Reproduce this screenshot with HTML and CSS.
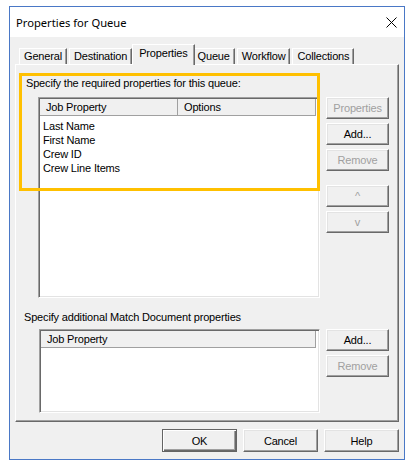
FILE: index.html
```html
<!DOCTYPE html>
<html lang="en">
<head>
    <meta charset="UTF-8">
    <meta name="viewport" content="width=device-width, initial-scale=1.0">
    <title>Properties for Queue</title>
    <link rel="stylesheet" href="styles.css">
</head>
<body>
    <div class="dialog">
        <div class="titlebar">
            <span class="title">Properties for Queue</span>
            <span class="close">
                <svg width="11" height="11" viewBox="0 0 11 11">
                    <path d="M0.5 0.5 L10.5 10.5 M10.5 0.5 L0.5 10.5" stroke="#000" stroke-width="1" fill="none"/>
                </svg>
            </span>
        </div>

        <div class="body">
            <div class="tabs">
                <div class="tab">General</div>
                <div class="tab">Destination</div>
                <div class="tab active">Properties</div>
                <div class="tab">Queue</div>
                <div class="tab">Workflow</div>
                <div class="tab">Collections</div>
            </div>

            <div class="page">
                <div class="highlight"></div>

                <div class="label">Specify the required properties for this queue:</div>
                <div class="group">
                    <div class="listbox tall">
                        <div class="header">
                            <div class="col col-job">Job Property</div>
                            <div class="col col-options">Options</div>
                        </div>
                        <div class="rows">
                            <div class="row">Last Name</div>
                            <div class="row">First Name</div>
                            <div class="row">Crew ID</div>
                            <div class="row">Crew Line Items</div>
                        </div>
                    </div>
                    <div class="side">
                        <button class="btn" disabled>Properties</button>
                        <button class="btn">Add...</button>
                        <button class="btn" disabled>Remove</button>
                        <button class="btn arrow" disabled>^</button>
                        <button class="btn" disabled>v</button>
                    </div>
                </div>

                <div class="label second">Specify additional Match Document properties</div>
                <div class="group second">
                    <div class="listbox short">
                        <div class="header">
                            <div class="col col-full">Job Property</div>
                        </div>
                    </div>
                    <div class="side">
                        <button class="btn">Add...</button>
                        <button class="btn" disabled>Remove</button>
                    </div>
                </div>
            </div>

            <div class="footer">
                <button class="btn wide default">OK</button>
                <button class="btn wide">Cancel</button>
                <button class="btn wide">Help</button>
            </div>
        </div>
    </div>
</body>
</html>
```

FILE: styles.css
```css
body {
    margin: 0;
    background: #ffffff;
    font-family: "Liberation Sans", Arial, sans-serif;
    font-size: 11px;
    letter-spacing: -0.17px;
    color: #000000;
}

.dialog {
    margin: 6px 0 0 9px;
    width: 394px;
    height: 452px;
    border: 1px solid #4a78c6;
    display: flex;
    flex-direction: column;
}

.titlebar {
    height: 30px;
    background: #ffffff;
    display: flex;
    align-items: center;
    justify-content: space-between;
    padding: 0 7px 0 6px;
}

.title {
    font-family: "Noto Sans", "Open Sans", sans-serif;
    font-size: 11.2px;
    letter-spacing: 0;
    padding-top: 1px;
}

.close {
    display: flex;
    padding-top: 1px;
}

.body {
    flex: 1;
    background: #f0f0f0;
    padding: 7px 5px 6px 5px;
    display: flex;
    flex-direction: column;
}

/* tab strip */
.tabs {
    display: flex;
    align-items: flex-end;
    height: 20px;
    padding-left: 4px;
}

.tab {
    height: 15px;
    line-height: 15px;
    padding: 0 4px;
    margin-right: 2px;
    border: 1px solid #ffffff;
    border-right-color: #696969;
    border-bottom: none;
    box-shadow: inset -1px 0 #a0a0a0;
    white-space: nowrap;
}

.tab.active {
    height: 20px;
    line-height: 17px;
    margin: 0 0 -1px -2px;
    padding: 0 6px;
    background: #f0f0f0;
    position: relative;
    z-index: 1;
}

.tab.active + .tab {
    margin-left: -2px;
}

/* tab page */
.page {
    position: relative;
    height: 356px;
    border: 1px solid #ffffff;
    border-right-color: #696969;
    border-bottom-color: #696969;
    box-shadow: inset -1px -1px #a0a0a0;
}

.highlight {
    position: absolute;
    left: 3px;
    top: 8px;
    width: 295px;
    height: 112px;
    border: 3px solid #ffc000;
    pointer-events: none;
}

.label {
    line-height: 14px;
    padding: 11px 0 0 10px;
}

.label.second {
    padding: 12px 0 0 8px;
}

.group {
    display: flex;
    gap: 6px;
    margin-top: 7px;
    padding-left: 22px;
}

.group.second {
    margin-top: 5px;
    padding-left: 23px;
}

/* list view */
.listbox {
    box-sizing: border-box;
    background: #ffffff;
    border: 1px solid #a0a0a0;
    border-right-color: #ffffff;
    border-bottom-color: #ffffff;
    box-shadow: inset 1px 1px #696969, inset -1px -1px #e3e3e3;
    padding: 1px 0 0 1px;
}

.listbox.tall {
    width: 282px;
    height: 201px;
}

.listbox.short {
    width: 281px;
    height: 84px;
}

.header {
    display: flex;
    height: 16px;
    margin-right: 3px;
    background: #f0f0f0;
    border-bottom: 1px solid #a0a0a0;
}

.col {
    line-height: 16px;
    padding-left: 6px;
    border-right: 1px solid #a0a0a0;
    box-sizing: border-box;
}

.col-job {
    width: 138px;
}

.col-options {
    flex: 1;
}

.col-full {
    flex: 1;
}

.rows {
    padding: 3px 0 0 3px;
}

.row {
    line-height: 14px;
}

/* buttons */
.side {
    display: flex;
    flex-direction: column;
    gap: 4px;
}

.btn {
    box-sizing: border-box;
    width: 63px;
    height: 22px;
    padding: 0;
    font-family: "Liberation Sans", Arial, sans-serif;
    font-size: 11px;
    letter-spacing: -0.17px;
    color: #000000;
    background: #f0f0f0;
    border: 1px solid #ffffff;
    border-right-color: #696969;
    border-bottom-color: #696969;
    box-shadow: inset -1px -1px #a0a0a0, inset 1px 1px #e3e3e3;
}

.btn:disabled {
    color: #a0a0a0;
}

.btn.arrow {
    margin-top: 10px;
}

.footer {
    display: flex;
    justify-content: flex-end;
    gap: 6px;
    margin-top: 7px;
}

.btn.wide {
    width: 75px;
    height: 23px;
}

.btn.default {
    border: 1px solid #646464;
    box-shadow: inset 1px 1px #ffffff, inset -1px -1px #696969, inset -2px -2px #a0a0a0;
}
```
